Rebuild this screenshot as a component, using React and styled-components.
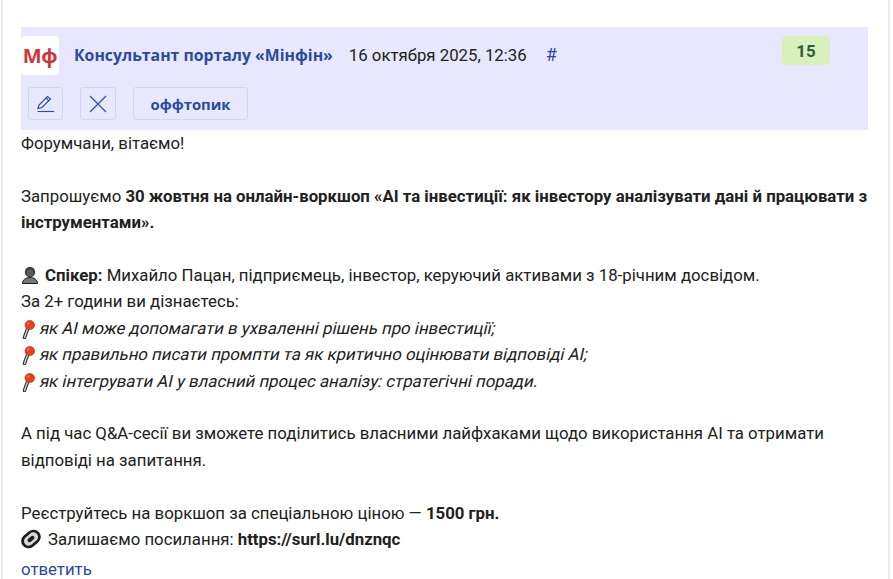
import React from 'react';
import styled, {createGlobalStyle} from 'styled-components';

const GlobalStyle = createGlobalStyle`
  html, body {
    margin: 0;
    padding: 0;
    background: #fff;
    overflow: hidden;
  }
  body {
    font-family: Roboto, "Liberation Sans", sans-serif;
    font-size: 16.8px;
    color: #212121;
  }
`;

const Page = styled.div`
  box-sizing: border-box;
  width: 889px;
  height: 579px;
  margin-left: 1px;
  padding: 27px 20px 0 18px;
  border-left: 2px solid #ebebeb;
  border-right: 2px solid #ebebeb;
  overflow: hidden;
`;

const PostHeader = styled.div`
  box-sizing: border-box;
  height: 103px;
  background: #e7e7fd;
  position: relative;
  padding-top: 9px;
`;

const TopRow = styled.div`
  display: flex;
  align-items: center;
  height: 39px;
`;

const Avatar = styled.div`
  width: 38px;
  height: 39px;
  background: #fff;
  border-radius: 4px;
  display: flex;
  align-items: center;
  justify-content: center;
  color: #cf3535;
  font-family: "Open Sans", sans-serif;
  font-weight: 700;
  font-size: 20px;
  letter-spacing: -0.3px;
  flex-shrink: 0;
`;

const AuthorName = styled.a`
  margin-left: 15px;
  font-family: "Open Sans", sans-serif;
  font-weight: 700;
  font-size: 15.8px;
  color: #2a4a9c;
  margin-top: -1px;
`;

const PostDate = styled.span`
  margin-left: 16px;
  color: #212121;
  margin-top: -2px;
`;

const Anchor = styled.a`
  margin-left: 19px;
  font-size: 18px;
  color: #2a4a9c;
  margin-top: -2px;
`;

const Rating = styled.div`
  position: absolute;
  top: 9px;
  left: 761px;
  width: 48px;
  height: 29px;
  border-radius: 5px;
  background: #d8f0bc;
  color: #2b5d3f;
  font-weight: 700;
  display: flex;
  align-items: center;
  justify-content: center;
`;

const ActionRow = styled.div`
  display: flex;
  margin-top: 12px;
  margin-left: 7px;
`;

const ActionButton = styled.button`
  box-sizing: border-box;
  width: ${props => props.$width}px;
  height: 33px;
  margin-right: ${props => props.$gap || 0}px;
  border: 1px solid #cdd8f2;
  border-radius: 3px;
  background: transparent;
  color: #2a4a9c;
  display: flex;
  align-items: center;
  justify-content: center;
  padding: 0;
  font-family: "Open Sans", sans-serif;
  font-weight: 700;
  font-size: 14.8px;
`;

const PostBody = styled.div`
  line-height: 26.4px;
`;

const Line = styled.div`
  height: ${props => (props.$wrap ? 'auto' : '26.4px')};
  min-height: 26.4px;
  white-space: pre-wrap;
`;

// the original falls back to a slanted regular face, wider than Roboto Italic
const SlantedText = styled.span`
  display: inline-block;
  transform: skewX(-13deg);
  transform-origin: 0 70%;
`;

const EmojiIcon = styled.svg`
  width: ${props => props.$size}px;
  height: ${props => props.$h || props.$size}px;
  vertical-align: ${props => props.$drop}px;
  margin-right: ${props => props.$gap}px;
  margin-top: -4px;
`;

const ReplyLink = styled.a`
  display: block;
  margin-top: 4px;
  line-height: 26px;
  color: #2a4a9c;
`;

const PenIcon = () => (
  <svg width="18" height="18" viewBox="0 0 18 18" fill="none" stroke="#2a4a9c" strokeWidth="1.1">
    <path d="M1 13.5 L2 10 L10.5 1.5 L13.5 4 L5 12.5 Z" />
    <path d="M9 3 L12 5.8" />
    <path d="M0.5 16.5 H17" />
  </svg>
);

const CrossIcon = () => (
  <svg width="18" height="18" viewBox="0 0 18 18" fill="none" stroke="#2a4a9c" strokeWidth="1.1">
    <path d="M1 1 L17 17 M17 1 L1 17" />
  </svg>
);

const Bust = () => (
  <EmojiIcon $size={18} $drop={-3} $gap={6} viewBox="0 0 18 18">
    <circle cx="9" cy="6" r="5.2" fill="#3e3e3e" />
    <ellipse cx="9" cy="7" rx="3.2" ry="3.6" fill="#5c5c5c" />
    <path d="M1.5 17.5 C1.5 13.5 5 11.5 9 11.5 C13 11.5 16.5 13.5 16.5 17.5 Z" fill="#777" stroke="#222" strokeWidth="1" />
  </EmojiIcon>
);

const Pin = () => (
  <EmojiIcon $size={14} $h={19} $drop={-5} $gap={4} viewBox="0 0 14 19">
    <path d="M7 8 L5 13 L3.5 17.5" stroke="#333" strokeWidth="3.6" strokeLinecap="round" fill="none" />
    <path d="M7 8 L5 13 L3.5 17.5" stroke="#ccc" strokeWidth="1.4" strokeLinecap="round" fill="none" />
    <ellipse cx="8.8" cy="5" rx="4.8" ry="4.6" fill="#e8401f" stroke="#b52a10" strokeWidth="0.6" />
    <circle cx="7.2" cy="3.6" r="1" fill="#f98a6c" />
  </EmojiIcon>
);

const Clip = () => (
  <EmojiIcon $size={20} $drop={-4} $gap={7} viewBox="0 0 18 18">
    <g transform="rotate(-40 9 9)">
      <rect x="-0.5" y="2.5" width="19" height="13" rx="6.5" fill="#1c1c1c" />
      <rect x="2" y="4.8" width="14" height="8.4" rx="4.2" fill="#d9d9d9" />
      <rect x="5.5" y="7.2" width="7" height="3.6" rx="1.8" fill="#1c1c1c" />
    </g>
  </EmojiIcon>
);

export default function App() {
  return (
    <>
      <GlobalStyle />
      <Page>
        <PostHeader>
          <TopRow>
            <Avatar>Мф</Avatar>
            <AuthorName>Консультант порталу «Мінфін»</AuthorName>
            <PostDate>16 октября 2025, 12:36</PostDate>
            <Anchor>#</Anchor>
          </TopRow>
          <Rating>15</Rating>
          <ActionRow>
            <ActionButton $width={35} $gap={17}><PenIcon /></ActionButton>
            <ActionButton $width={36} $gap={17}><CrossIcon /></ActionButton>
            <ActionButton $width={115}>оффтопик</ActionButton>
          </ActionRow>
        </PostHeader>
        <PostBody>
          <Line>Форумчани, вітаємо!</Line>
          <Line />
          <Line $wrap>
            Запрошуємо <b>30 жовтня на онлайн-воркшоп «AI та інвестиції: як інвестору аналізувати дані й працювати з інструментами».</b>
          </Line>
          <Line />
          <Line><Bust /><b>Спікер:</b> Михайло Пацан, підприємець, інвестор, керуючий активами з 18-річним досвідом.</Line>
          <Line>За 2+ години ви дізнаєтесь:</Line>
          <Line><Pin /><SlantedText>як AI може допомагати в ухваленні рішень про інвестиції;</SlantedText></Line>
          <Line><Pin /><SlantedText>як правильно писати промпти та як критично оцінювати відповіді AI;</SlantedText></Line>
          <Line><Pin /><SlantedText>як інтегрувати AI у власний процес аналізу: стратегічні поради.</SlantedText></Line>
          <Line />
          <Line $wrap>А під час Q&amp;A-сесії ви зможете поділитись власними лайфхаками щодо використання AI та отримати відповіді на запитання.</Line>
          <Line />
          <Line>Реєструйтесь на воркшоп за спеціальною ціною — <b>1500 грн.</b></Line>
          <Line><Clip />Залишаємо посилання: <b>https://surl.lu/dnznqc</b></Line>
          <ReplyLink>ответить</ReplyLink>
        </PostBody>
      </Page>
    </>
  );
}
